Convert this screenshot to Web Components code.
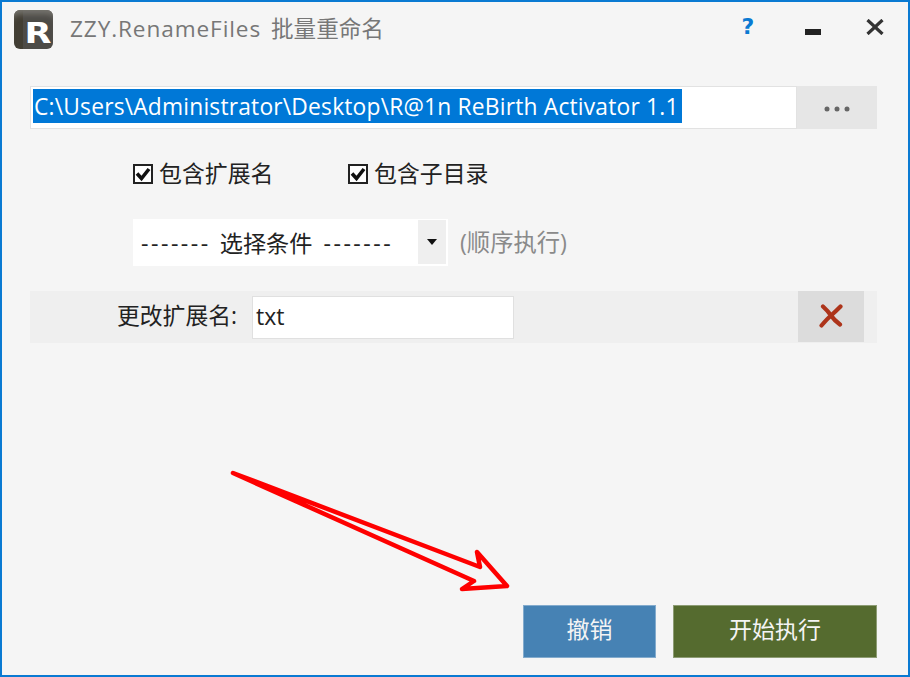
<!DOCTYPE html>
<html lang="zh"><head><meta charset="utf-8"><title>ZZY.RenameFiles</title>
<style>
html,body{margin:0;padding:0;background:#f5f5f5}
body{font-family:"Open Sans","Noto Sans CJK SC",sans-serif;font-size:21px;color:#222}
</style></head><body>
<rf-window>
  <rf-titlebar slot="title" name="ZZY.RenameFiles" label="批量重命名"></rf-titlebar>
  <rf-pathrow value="C:\Users\Administrator\Desktop\R@1n ReBirth Activator 1.1"></rf-pathrow>
  <rf-options>
    <rf-check style="width:215px">包含扩展名</rf-check>
    <rf-check>包含子目录</rf-check>
  </rf-options>
  <rf-select text="选择条件" hint="(顺序执行)"></rf-select>
  <rf-condition label="更改扩展名:" value="txt"></rf-condition>
  <rf-actions>
    <rf-button color="#4682b4" width="133" >撤销</rf-button>
    <rf-button color="#556b2f" width="204" >开始执行</rf-button>
  </rf-actions>
  <rf-arrow></rf-arrow>
</rf-window>
<script>
const FONT='"Open Sans","Noto Sans CJK SC",sans-serif';
function def(name,render){
  customElements.define(name,class extends HTMLElement{
    connectedCallback(){
      if(this.shadowRoot)return;
      this.attachShadow({mode:'open'}).innerHTML=render(this);
    }
  });
}
def('rf-window',()=>`<style>
:host{display:flex;flex-direction:column;position:relative;box-sizing:border-box;width:910px;height:677px;border:2px solid #0a7ad2;background:#f5f5f5;padding:0 31px 17px 28px;overflow:hidden}
</style><slot name="title"></slot><slot></slot>`);
def('rf-titlebar',el=>`<style>
:host{display:flex;align-items:center;height:84px;margin:0 -31px 0 -28px;padding:0 0 30px 12px;box-sizing:border-box}
.logo{width:39px;height:39px;border-radius:6px;background:linear-gradient(90deg,#423e34 0 22%,#4d4b47 22% 100%);box-shadow:inset 0 9px 6px -5px #77756f;display:flex;align-items:flex-end;justify-content:flex-end;color:#fff;flex:none;overflow:hidden}
.logo b{font:700 28px/28px "DejaVu Sans",sans-serif;margin:0 1px 1px 0;transform:scaleX(1.25);transform-origin:right bottom;display:block}
.t{margin-left:17px;font:22.600px/1 ${FONT};color:#777;flex:1;white-space:nowrap}
.t i{font-style:normal;letter-spacing:.9px;margin-right:4px}
.q{font:700 22px/1 "DejaVu Sans",sans-serif;color:#0a7ad2;width:16px;text-align:center;margin-right:49px;margin-top:-4px}
svg{display:block;flex:none}
.min{margin-right:45px;margin-top:6px}
.x{margin-right:24px;margin-top:-5px}
</style>
<span class="logo"><b>R</b></span><span class="t"><i>${el.getAttribute('name')}</i> ${el.getAttribute('label')}</span><span class="q">?</span>
<svg class="min" width="16" height="6"><rect width="16" height="6" fill="#222"/></svg>
<svg class="x" width="18" height="16" viewBox="0 0 18 16"><path d="M1.500 1L16.500 15M16.500 1L1.500 15" stroke="#333" stroke-width="3.200" fill="none"/></svg>`);
def('rf-pathrow',el=>`<style>
:host{display:flex;height:43px;flex:none}
.f{flex:1;box-sizing:border-box;background:#fff;border:1px solid #e2e2e2;padding:2px;white-space:nowrap;overflow:hidden}
.s{display:block;width:fit-content;background:#0078d7;color:#fff;font:22.800px/35px ${FONT};letter-spacing:.19px;height:34px;padding:0 3px 0 1px}
button{all:unset;width:80px;background:#e6e6e6;display:flex;align-items:center;justify-content:center;padding-top:3px;box-sizing:border-box}
</style><div class="f"><span class="s">${el.getAttribute('value')}</span></div>
<button><svg width="26" height="6"><circle cx="3" cy="3" r="2.500" fill="#666"/><circle cx="13" cy="3" r="2.500" fill="#666"/><circle cx="23" cy="3" r="2.500" fill="#666"/></svg></button>`);
def('rf-options',()=>`<style>
:host{display:flex;height:28px;margin:31px 0 0 103px;flex:none;align-items:center}
</style><slot></slot>`);
def('rf-check',()=>`<style>
:host{display:flex;align-items:center;font:22.900px/28px ${FONT};color:#222}
.b{width:20px;height:20px;box-sizing:border-box;border:2px solid #222;margin-right:6px;flex:none;background:#fff}
svg{display:block}
</style><span class="b"><svg width="16" height="16" viewBox="0 0 16 16"><path d="M2 7.500L6.500 12.500L14 3" stroke="#111" stroke-width="3.600" fill="none"/></svg></span><slot></slot>`);
def('rf-select',el=>`<style>
:host{display:flex;align-items:center;height:47px;margin:31px 0 0 103px;flex:none}
.box{width:315px;height:47px;box-sizing:border-box;background:#fff;display:flex;padding:1px 2px 2px 0}
.v{flex:1;font:23.200px/47px ${FONT};color:#222;padding-left:8px;white-space:nowrap}
.v i{font-style:normal;letter-spacing:2.500px}
.v u{text-decoration:none;margin:0 11px 0 9px}
.a{width:28px;background:#efefef;display:flex;align-items:center;justify-content:center}
.h{margin-left:12px;font:23.300px/1 ${FONT};color:#8a8a8a;white-space:nowrap}
</style><div class="box"><span class="v"><i>-------</i><u>${el.getAttribute('text')}</u><i>-------</i></span><span class="a"><svg width="10" height="6"><path d="M0 0H10L5 6Z" fill="#111"/></svg></span></div><span class="h">${el.getAttribute('hint')}</span>`);
def('rf-condition',el=>`<style>
:host{display:flex;align-items:center;height:52px;margin-top:25px;background:#efefef;flex:none;padding-right:13px}
.l{width:207px;text-align:right;font:22.800px/1 ${FONT};color:#222;white-space:nowrap;margin-top:-2px}
.i{box-sizing:border-box;width:262px;height:43px;margin-left:15px;background:#fff;border:1px solid #e0e0e0;font:23px/39px ${FONT};color:#222;padding-left:3px}
.sp{flex:1}
.d{width:66px;height:51px;margin-top:-1px;background:#dcdcdc;display:flex;align-items:center;justify-content:center;padding-bottom:2px;box-sizing:border-box}
</style><span class="l">${el.getAttribute('label')}</span><span class="i">${el.getAttribute('value')}</span><span class="sp"></span>
<span class="d"><svg width="24" height="24" viewBox="0 0 24 24"><path d="M2.500 21.500Q8 15 12 11.500T21.500 2.500M4 2.500Q9 7 12 11.500T21 20.500" stroke="#ad341a" stroke-width="4.200" stroke-linecap="round" fill="none"/></svg></span>`);
def('rf-actions',()=>`<style>
:host{display:flex;justify-content:flex-end;gap:17px;margin-top:auto;flex:none}
</style><slot></slot>`);
def('rf-button',el=>`<style>
:host{display:flex;align-items:center;justify-content:center;box-sizing:border-box;height:53px;width:${el.getAttribute('width')}px;background:${el.getAttribute('color')};border:1px solid #ffffff55;color:#f4f4f4;font:23px/1 ${FONT};padding-bottom:4px}
</style><slot></slot>`);
def('rf-arrow',()=>`<style>
:host{position:absolute;left:-2px;top:-2px;width:910px;height:677px;pointer-events:none}
svg{display:block}
</style><svg width="910" height="677"><path d="M233 473L480 567L477 552L507 586L462 589L474 581Z" fill="#f5f5f5" stroke="#fe0000" stroke-width="4.500" stroke-linejoin="round" stroke-linecap="round"/></svg>`);
</script>
</body></html>
